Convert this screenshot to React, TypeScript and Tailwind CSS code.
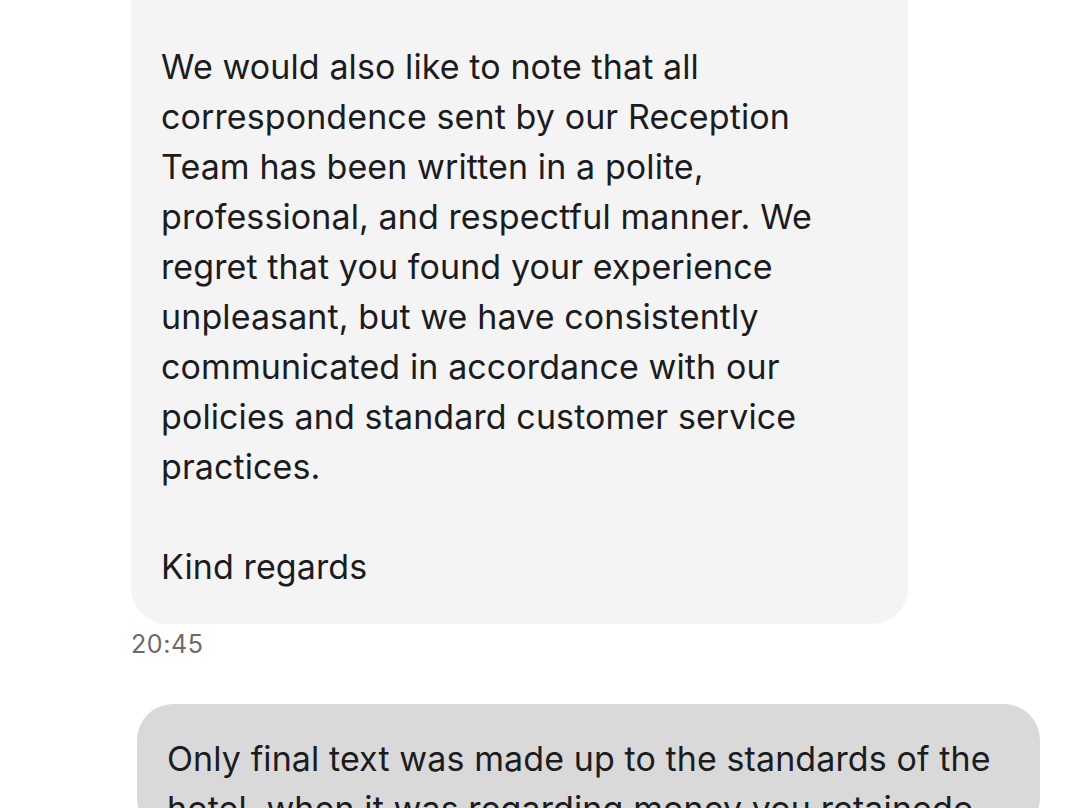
const FIRST = [
  "",
  "We would also like to note that all",
  "correspondence sent by our Reception",
  "Team has been written in a polite,",
  "professional, and respectful manner. We",
  "regret that you found your experience",
  "unpleasant, but we have consistently",
  "communicated in accordance with our",
  "policies and standard customer service",
  "practices.",
  "",
  "Kind regards",
];

const REPLY = [
  "Only final text was made up to the standards of the",
  "hotel, when it was regarding money you retainedo",
];

function Lines({ lines }: { lines: string[] }) {
  return (
    <>
      {lines.map((l, i) => (
        <div key={i} className="h-[50px] leading-[50px] whitespace-nowrap">
          {l || "\u00a0"}
        </div>
      ))}
    </>
  );
}

export default function App() {
  return (
    <div
      className="w-[1080px] h-[808px] overflow-hidden bg-white text-[#1c1c1e]"
      style={{ fontFamily: "Inter, 'Open Sans', sans-serif" }}
    >
      {/* Incoming message (top cut off) */}
      <div className="ml-[131px] -mt-[40px] w-[777px] rounded-[36px] bg-[#f4f4f4] px-[30px] pt-[32px] pb-[32px] text-[34px] tracking-[0.1px]">
        <Lines lines={FIRST} />
      </div>
      <div className="ml-[131px] mt-[6px] text-[25px] leading-[28px] text-[#6b6b6b] tracking-wide">20:45</div>

      {/* Outgoing reply */}
      <div className="ml-[137px] mt-[46px] w-[903px] rounded-[36px] bg-[#d9d9d9] px-[30px] pt-[30px] text-[34px] tracking-[0.1px]">
        <Lines lines={REPLY} />
      </div>
    </div>
  );
}
